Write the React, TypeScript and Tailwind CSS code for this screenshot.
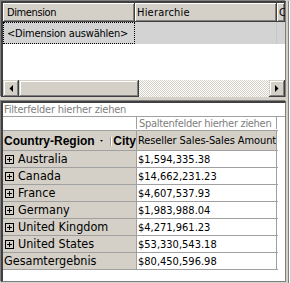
import React from "react";

const rows: [string, string][] = [
  ["Australia", "$1,594,335.38"],
  ["Canada", "$14,662,231.23"],
  ["France", "$4,607,537.93"],
  ["Germany", "$1,983,988.04"],
  ["United Kingdom", "$4,271,961.23"],
  ["United States", "$53,330,543.18"],
];

function Plus() {
  return (
    <svg width="9" height="9" viewBox="0 0 9 9" className="shrink-0 block">
      <rect x="0.5" y="0.5" width="8" height="8" fill="none" stroke="#000" />
      <path d="M2 4.5H7M4.5 2V7" stroke="#000" />
    </svg>
  );
}

function ArrowLeft() {
  return (
    <svg width="4" height="7" viewBox="0 0 4 7" className="block">
      <path d="M4 0V7L0.5 3.5Z" fill="#000" />
    </svg>
  );
}
function ArrowRight() {
  return (
    <svg width="4" height="7" viewBox="0 0 4 7" className="block">
      <path d="M0 0V7L3.5 3.5Z" fill="#000" />
    </svg>
  );
}

const raised =
  "bg-[#d4d0c8] shadow-[inset_-1px_-1px_0_#404040,inset_1px_1px_0_#ffffff,inset_-2px_-2px_0_#808080]";
const raisedBtn =
  "bg-[#d4d0c8] shadow-[inset_-1px_-1px_0_#404040,inset_1px_1px_0_#d4d0c8,inset_-2px_-2px_0_#808080,inset_2px_2px_0_#ffffff]";

const tahoma = { fontFamily: '"DejaVu Sans Condensed", "DejaVu Sans", sans-serif' };
const arial = { fontFamily: '"Liberation Sans", Arial, sans-serif' };

export default function App() {
  return (
    <div
      className="w-[291px] h-[283px] bg-[#d4d0c8] flex overflow-hidden text-[11px] leading-none text-black pt-[1px] pl-[1px]"
      style={tahoma}
    >
      <div className="w-[285px] flex flex-col">
        {/* top panel */}
        <div className="h-[96px] shrink-0 border-t-2 border-l-2 border-r border-t-[#404040] border-l-[#404040] border-r-[#808080] shadow-[-1px_-1px_0_#808080] bg-white flex flex-col overflow-hidden">
          <div className="flex h-[19px] shrink-0">
            <div className={`w-[132px] ${raised} flex items-center pl-[4px] tracking-[-0.4px]`}>Dimension</div>
            <div className={`w-[142px] ${raised} flex items-center pl-[2px] tracking-[0.2px]`}>Hierarchie</div>
            <div className={`flex-1 ${raised} flex items-center pl-[2px] overflow-hidden`}>C</div>
          </div>
          <div className="flex h-[22px] shrink-0 bg-[#d3d3d3]">
            <div className="w-[132px] border border-dotted border-black flex items-center pl-[3px] tracking-[-0.2px] whitespace-nowrap overflow-hidden">
              &lt;Dimension auswählen&gt;
            </div>
            <div className="w-[142px] border-r border-r-[#c8c8c8]"></div>
            <div className="flex-1"></div>
          </div>
          <div className="flex-1"></div>
          <div className="flex h-[17px] shrink-0">
            <div className={`w-[16px] ${raisedBtn} flex items-center justify-center`}>
              <ArrowLeft />
            </div>
            <div className={`w-[120px] ${raisedBtn}`}></div>
            <div className="flex-1 [background:repeating-conic-gradient(#d4d0c8_0%_25%,#ffffff_0%_50%)_0_0/2px_2px]"></div>
            <div className={`w-[16px] ${raisedBtn} flex items-center justify-center`}>
              <ArrowRight />
            </div>
          </div>
        </div>
        <div className="h-[4px] shrink-0"></div>
        {/* bottom panel */}
        <div className="flex-1 border-t-2 border-l-2 border-r border-b border-t-[#404040] border-l-[#404040] border-r-[#808080] border-b-[#808080] shadow-[-1px_-1px_0_#808080] bg-white flex flex-col overflow-hidden">
          <div className="h-[14px] shrink-0 border-b border-b-[#a0a0a0] flex items-center pl-[1px] text-[#808080] whitespace-nowrap tracking-[-0.2px]">
            Filterfelder hierher ziehen
          </div>
          <div className="flex h-[13px] shrink-0 border-b border-b-transparent">
            <div className="w-[133px]"></div>
            <div className="w-[141px] border-l border-r border-[#a0a0a0] flex items-center pl-[2px] text-[#808080] whitespace-nowrap overflow-hidden tracking-[-0.3px]">
              Spaltenfelder hierher ziehen
            </div>
          </div>
          <div className="flex h-[21px] shrink-0 border-t border-b border-[#a0a0a0] w-[275px]">
            <div
              className="w-[133px] bg-[#d4d0c8] flex items-center pl-[1px] pt-[1px] font-bold text-[12px] whitespace-nowrap overflow-hidden"
              style={arial}
            >
              <span>Country-Region</span>
              <svg width="6" height="4" viewBox="0 0 6 4" className="ml-[5px] block">
                <path d="M0 0H6L3 3.5Z" fill="#000" />
              </svg>
              <span className="ml-[7px] w-[1px] h-[9px] bg-[#a0a0a0] shadow-[1px_0_0_#ffffff]"></span>
              <span className="ml-[3px]">City</span>
            </div>
            <div className="w-[141px] border-l border-r border-[#a0a0a0] bg-[#d4d0c8] flex items-center pl-[1px] whitespace-nowrap overflow-hidden tracking-[-0.1px]">
              Reseller Sales-Sales Amount
            </div>
          </div>
          {rows.map(([c, v]) => (
            <div key={c} className="flex h-[17px] shrink-0 border-b border-[#a0a0a0] w-[275px]">
              <div className="w-[133px] bg-[#d4d0c8] flex items-center pl-[2px]">
                <Plus />
                <span className="ml-[4px] text-[12.5px]">{c}</span>
              </div>
              <div className="w-[141px] border-l border-r border-[#a0a0a0] flex items-center pl-[1px]">
                {v}
              </div>
            </div>
          ))}
          <div className="flex h-[17px] shrink-0 border-b border-[#a0a0a0] w-[275px]">
            <div className="w-[133px] bg-[#d4d0c8] flex items-center pl-[1px] text-[12.5px]">Gesamtergebnis</div>
            <div className="w-[141px] border-l border-r border-[#a0a0a0] flex items-center pl-[1px]">
              $80,450,596.98
            </div>
          </div>
          <div className="flex-1"></div>
        </div>
        <div className="h-[1px] shrink-0"></div>
      </div>
      <div className="flex-1 flex">
        <div className="w-[2px]"></div>
        <div className="w-[1px] bg-[#808080]"></div>
        <div className="w-[1px] bg-white"></div>
      </div>
    </div>
  );
}
